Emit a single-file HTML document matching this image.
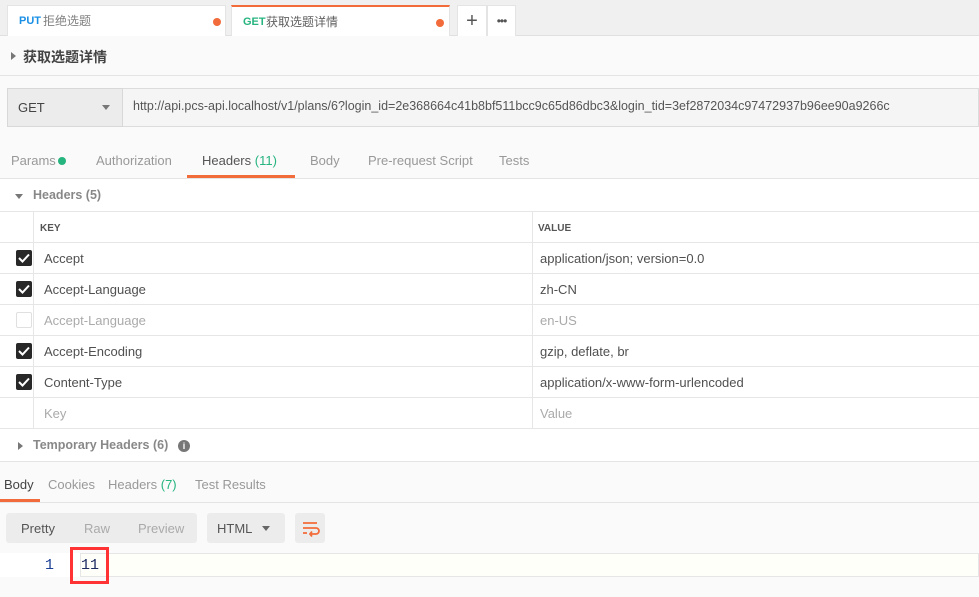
<!DOCTYPE html>
<html><head><meta charset="utf-8"><style>
*{box-sizing:border-box;margin:0;padding:0}
body{width:979px;height:597px;overflow:hidden;background:#fafafa;font-family:"Liberation Sans","Noto Sans CJK SC",sans-serif;font-size:13px;color:#505050;position:relative}
.a{position:absolute}
.tab{position:absolute;top:5px;height:31px;background:#fff;border:1px solid #e4e4e4;border-bottom:none;font-size:12px;line-height:31px}
.dot{position:absolute;width:8px;height:8px;border-radius:50%;background:#f26b3a;top:12px}
.row{position:absolute;left:0;width:979px;height:31px;border-bottom:1px solid #e6e6e6;background:#fff}
.row .k{position:absolute;left:44px;top:8px}
.row .v{position:absolute;left:540px;top:8px}
.cb{position:absolute;left:16px;top:7px;width:16px;height:16px;border-radius:2px;background:#282828}
.cb svg{position:absolute;left:2px;top:3px}
.vl{position:absolute;top:212px;height:217px;width:1px;background:#e6e6e6}
</style></head><body>
<div class="a" style="left:0;top:0;width:979px;height:36px;background:#f0f0f0;border-bottom:1px solid #e0e0e0"></div>
<div class="tab" style="left:7px;width:219px"><span style="position:absolute;left:11px;color:#1a8fe6;font-weight:bold;font-size:11px">PUT</span><span style="position:absolute;left:35px;color:#808080">拒绝选题</span><div class="dot" style="left:205px"></div></div>
<div class="tab" style="left:231px;width:219px;border-top:2px solid #f26b3a;height:32px"><span style="position:absolute;left:11px;color:#26b47f;font-weight:bold;font-size:11px">GET</span><span style="position:absolute;left:34px;color:#606060">获取选题详情</span><div class="dot" style="left:204px"></div></div>
<div class="tab" style="left:457px;width:30px;text-align:center;font-size:20px;color:#555">+</div>
<div class="tab" style="left:487px;width:29px;text-align:center;font-size:12px;color:#555;letter-spacing:-1px">•••</div>
<div class="a" style="left:0;top:36px;width:979px;height:40px;background:#fafafa;border-bottom:1px solid #e4e4e4"></div>
<div class="a" style="left:11px;top:52px;width:0;height:0;border-left:5px solid #777;border-top:4px solid transparent;border-bottom:4px solid transparent"></div>
<div class="a" style="left:23px;top:47px;font-size:14px;font-weight:bold;color:#444">获取选题详情</div>
<div class="a" style="left:7px;top:88px;width:972px;height:39px;border:1px solid #dcdcdc;background:#f5f5f5"></div>
<div class="a" style="left:7px;top:88px;width:116px;height:39px;background:#ececec;border:1px solid #d8d8d8"></div>
<div class="a" style="left:18px;top:100px;font-size:13px;color:#444">GET</div>
<div class="a" style="left:102px;top:105px;border-top:5px solid #777;border-left:4px solid transparent;border-right:4px solid transparent"></div>
<div class="a" style="left:133px;top:99px;font-size:12.5px;color:#555;white-space:nowrap">http://api.pcs-api.localhost/v1/plans/6?login_id=2e368664c41b8bf511bcc9c65d86dbc3&amp;login_tid=3ef2872034c97472937b96ee90a9266c</div>
<div class="a" style="left:0;top:142px;width:979px;height:37px;border-bottom:1px solid #e4e4e4"></div>
<div class="a" style="top:153px;left:11px;color:#999">Params</div><div class="a" style="left:58px;top:157px;width:8px;height:8px;border-radius:50%;background:#26b47f"></div>
<div class="a" style="top:153px;left:96px;color:#999">Authorization</div>
<div class="a" style="top:153px;left:202px;color:#555">Headers <span style="color:#26b47f">(11)</span></div>
<div class="a" style="left:187px;top:175px;width:108px;height:3px;background:#f26b3a"></div>
<div class="a" style="top:153px;left:310px;color:#999">Body</div>
<div class="a" style="top:153px;left:368px;color:#999">Pre-request Script</div>
<div class="a" style="top:153px;left:499px;color:#999">Tests</div>
<div class="a" style="left:0;top:179px;width:979px;height:33px;background:#fff;border-bottom:1px solid #e6e6e6"></div>
<div class="a" style="left:15px;top:194px;border-top:5px solid #777;border-left:4px solid transparent;border-right:4px solid transparent"></div>
<div class="a" style="left:33px;top:188px;color:#888;font-weight:bold;font-size:12.5px">Headers (5)</div>
<div class="row" style="top:212px"><span class="a" style="left:40px;top:11px;font-size:10px;font-weight:bold;color:#555">KEY</span><span class="a" style="left:538px;top:11px;font-size:10px;font-weight:bold;color:#555">VALUE</span></div>
<div class="row" style="top:243px"><div class="cb"><svg width="12" height="10"><path d="M1 5l3.5 3.5L11 1.5" stroke="#fff" stroke-width="2" fill="none"/></svg></div><span class="k">Accept</span><span class="v">application/json; version=0.0</span></div>
<div class="row" style="top:274px"><div class="cb"><svg width="12" height="10"><path d="M1 5l3.5 3.5L11 1.5" stroke="#fff" stroke-width="2" fill="none"/></svg></div><span class="k">Accept-Language</span><span class="v">zh-CN</span></div>
<div class="row" style="top:305px;color:#aaa"><div class="cb" style="background:#fff;border:1px solid #e0e0e0"></div><span class="k">Accept-Language</span><span class="v">en-US</span></div>
<div class="row" style="top:336px"><div class="cb"><svg width="12" height="10"><path d="M1 5l3.5 3.5L11 1.5" stroke="#fff" stroke-width="2" fill="none"/></svg></div><span class="k">Accept-Encoding</span><span class="v">gzip, deflate, br</span></div>
<div class="row" style="top:367px"><div class="cb"><svg width="12" height="10"><path d="M1 5l3.5 3.5L11 1.5" stroke="#fff" stroke-width="2" fill="none"/></svg></div><span class="k">Content-Type</span><span class="v">application/x-www-form-urlencoded</span></div>
<div class="row" style="top:398px;color:#aaa"><span class="k">Key</span><span class="v">Value</span></div>
<div class="vl" style="left:33px"></div><div class="vl" style="left:532px"></div>
<div class="a" style="left:0;top:429px;width:979px;height:33px;background:#fff;border-bottom:1px solid #e4e4e4"></div>
<div class="a" style="left:18px;top:442px;border-left:5px solid #777;border-top:4px solid transparent;border-bottom:4px solid transparent"></div>
<div class="a" style="left:33px;top:438px;color:#888;font-weight:bold;font-size:12.5px">Temporary Headers (6)</div>
<div class="a" style="left:178px;top:440px;width:12px;height:12px;border-radius:50%;background:#777;color:#fff;font-size:9px;font-weight:bold;text-align:center;line-height:12px">i</div>
<div class="a" style="left:0;top:462px;width:979px;height:41px;border-bottom:1px solid #e4e4e4"></div>
<div class="a" style="left:4px;top:477px;color:#444">Body</div>
<div class="a" style="left:0;top:499px;width:40px;height:3px;background:#f26b3a"></div>
<div class="a" style="left:48px;top:477px;color:#999">Cookies</div>
<div class="a" style="left:108px;top:477px;color:#999">Headers <span style="color:#26b47f">(7)</span></div>
<div class="a" style="left:195px;top:477px;color:#999">Test Results</div>
<div class="a" style="left:6px;top:513px;width:191px;height:30px;background:#ececec;border-radius:3px"></div>
<div class="a" style="left:21px;top:521px;color:#555">Pretty</div>
<div class="a" style="left:84px;top:521px;color:#aaa">Raw</div>
<div class="a" style="left:138px;top:521px;color:#aaa">Preview</div>
<div class="a" style="left:207px;top:513px;width:78px;height:30px;background:#ececec;border-radius:3px"></div>
<div class="a" style="left:217px;top:521px;color:#555">HTML</div>
<div class="a" style="left:262px;top:526px;border-top:5px solid #666;border-left:4px solid transparent;border-right:4px solid transparent"></div>
<div class="a" style="left:295px;top:513px;width:30px;height:30px;background:#ececec;border-radius:3px"><svg width="30" height="30"><path d="M8 10h14M8 15h13a3 3 0 0 1 0 6h-5M8 20h4M17 18.5l-2 2.5 2 2.5" stroke="#f26b3a" stroke-width="1.8" fill="none"/></svg></div>
<div class="a" style="left:0;top:553px;width:979px;height:24px;background:#fff"></div>
<div class="a" style="left:80px;top:553px;width:899px;height:24px;border:1px solid #e6e6e6;background:#fffffa"></div>
<div class="a" style="left:45px;top:557px;font-family:'Liberation Mono',monospace;font-size:15px;color:#1c3f94">1</div>
<div class="a" style="left:81px;top:557px;font-family:'Liberation Mono',monospace;font-size:15px;color:#1c2a60">11</div>
<div class="a" style="left:70px;top:547px;width:39px;height:37px;border:3px solid #f33"></div>
</body></html>
